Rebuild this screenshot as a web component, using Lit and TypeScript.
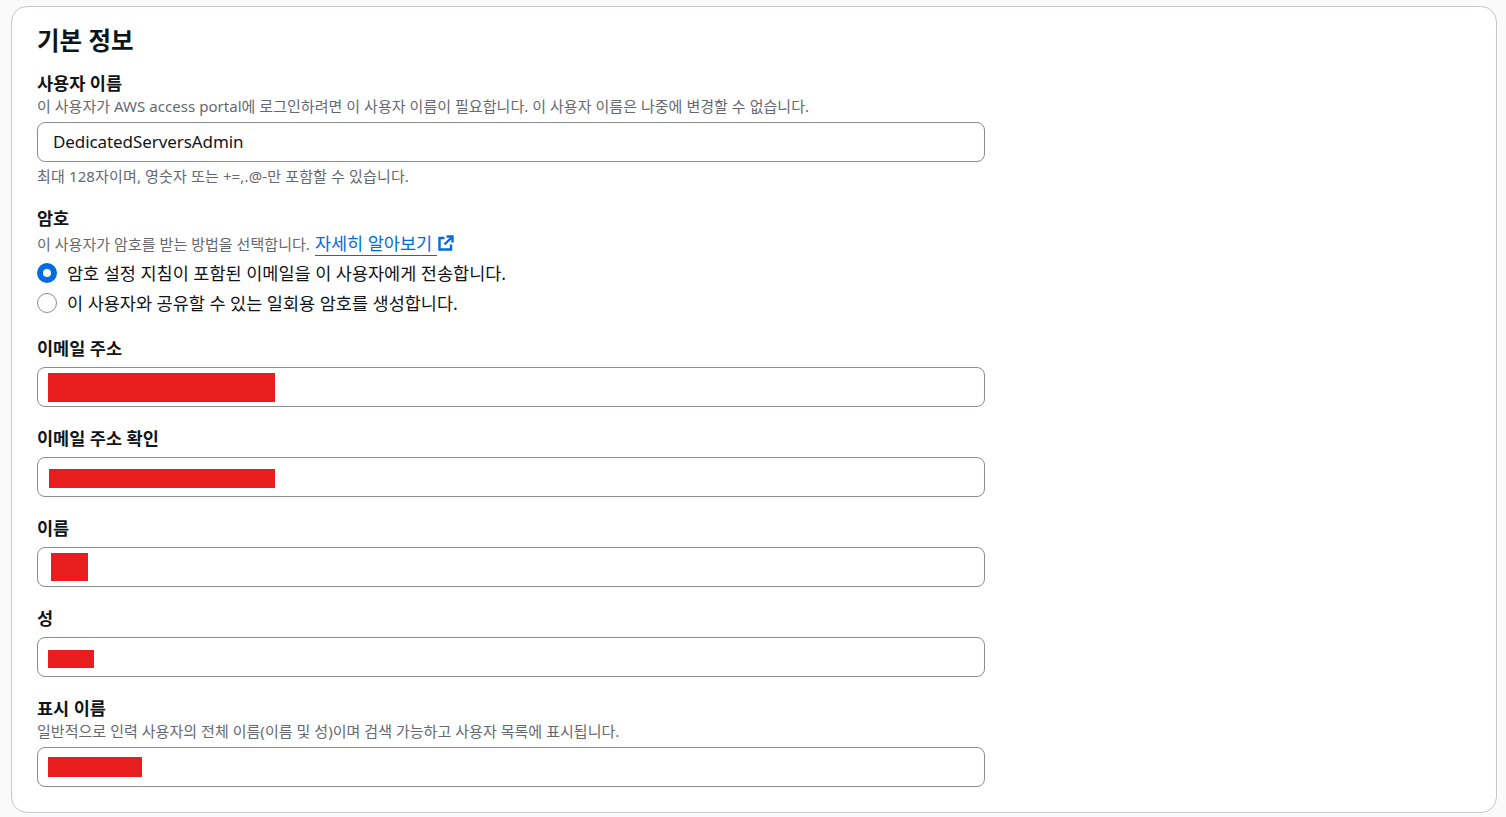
import { LitElement, css, html, nothing } from "lit";
import { customElement } from "lit/decorators.js";

interface Field {
  label: string;
  desc?: string;
  hint?: string;
  value?: string;
  // redaction block, relative to the input box
  mask?: { x: number; y: number; w: number; h: number };
}

const topField: Field = {
  label: "사용자 이름",
  desc: "이 사용자가 AWS access portal에 로그인하려면 이 사용자 이름이 필요합니다. 이 사용자 이름은 나중에 변경할 수 없습니다.",
  hint: "최대 128자이며, 영숫자 또는 +=,.@-만 포함할 수 있습니다.",
  value: "DedicatedServersAdmin",
};

const fields: Field[] = [
  { label: "이메일 주소", mask: { x: 11, y: 6, w: 227, h: 29 } },
  { label: "이메일 주소 확인", mask: { x: 12, y: 12, w: 226, h: 19 } },
  { label: "이름", mask: { x: 14, y: 6, w: 37, h: 28 } },
  { label: "성", mask: { x: 11, y: 13, w: 46, h: 18 } },
  {
    label: "표시 이름",
    desc: "일반적으로 인력 사용자의 전체 이름(이름 및 성)이며 검색 가능하고 사용자 목록에 표시됩니다.",
    mask: { x: 11, y: 10, w: 94, h: 20 },
  },
];

@customElement("app-root")
export class AppRoot extends LitElement {
  private renderField(f: Field) {
    return html`<div class="field ${f.hint ? "with-hint" : ""}">
      <div class="label">${f.label}</div>
      ${f.desc ? html`<div class="desc">${f.desc}</div>` : nothing}
      <div class="input-wrap ${f.desc ? "after-desc" : ""}">
        <input class="input" type="text" .value=${f.value ?? ""} />
        ${f.mask
          ? html`<div
              class="mask"
              style="left:${f.mask.x}px;top:${f.mask.y}px;width:${f.mask.w}px;height:${f.mask.h}px"
            ></div>`
          : nothing}
      </div>
      ${f.hint ? html`<div class="desc hint">${f.hint}</div>` : nothing}
    </div>`;
  }

  render() {
    return html`<section class="card">
      <h2 class="title">기본 정보</h2>
      ${this.renderField(topField)}
      <div class="field password">
        <div class="label">암호</div>
        <div class="desc pw-desc">
          이 사용자가 암호를 받는 방법을 선택합니다.
          <a class="link" href="#"
            >자세히 알아보기
            <svg class="ext" viewBox="0 0 16 16" width="16" height="16" fill="none" stroke="currentColor" stroke-width="2.4">
              <path d="M6.5 3H1.5v11.5H13V9.5" />
              <path d="M8.5 1.5H14.5V7.5M14.5 1.5 6.5 9.5" />
            </svg></a
          >
        </div>
        <label class="radio-row">
          <span class="radio checked"></span>
          <span class="radio-text">암호 설정 지침이 포함된 이메일을 이 사용자에게 전송합니다.</span>
        </label>
        <label class="radio-row">
          <span class="radio"></span>
          <span class="radio-text">이 사용자와 공유할 수 있는 일회용 암호를 생성합니다.</span>
        </label>
      </div>
      ${fields.map((f) => this.renderField(f))}
    </section>`;
  }

  static styles = css`
    :host {
      display: block;
      height: 817px;
      box-sizing: border-box;
      padding: 6px 9px 4px 11px;
      background: #fafafb;
      overflow: hidden;
      font-family: "Noto Sans", "Noto Sans CJK KR", sans-serif;
      color: #0f141a;
    }
    .card {
      box-sizing: border-box;
      height: 807px;
      background: #fff;
      border: 1px solid #c6c6cd;
      border-radius: 16px;
      padding: 18px 25px 0;
      display: flex;
      flex-direction: column;
    }
    .title {
      margin: 0 0 15px;
      font-size: 24.5px;
      line-height: 32px;
      font-weight: 700;
    }
    .field {
      width: 948px;
      margin-bottom: 20px;
    }
    .field.with-hint {
      margin-bottom: 21px;
    }
    .label {
      font-size: 17.5px;
      line-height: 22px;
      font-weight: 700;
      margin-bottom: 8px;
    }
    .label:has(+ .desc) {
      margin-bottom: 2px;
    }
    .desc {
      font-size: 15px;
      line-height: 20px;
      letter-spacing: 0.04px;
      color: #656871;
      white-space: nowrap;
    }
    .input-wrap {
      position: relative;
      height: 40px;
    }
    .input-wrap.after-desc {
      margin-top: 6px;
    }
    .input {
      box-sizing: border-box;
      display: block;
      width: 100%;
      height: 40px;
      padding: 0 15px 2px;
      border: 1px solid #8c8c94;
      border-radius: 8px;
      background: #fff;
      outline: none;
      font: inherit;
      font-size: 17px;
      letter-spacing: -0.08px;
      color: #0f141a;
    }
    .mask {
      position: absolute;
      background: #e81d1d;
    }
    .hint {
      margin-top: 4px;
      letter-spacing: 0.14px;
    }
    .pw-desc {
      margin-top: 5px;
      margin-bottom: 4px;
      display: flex;
      align-items: center;
      gap: 4px;
    }
    .password {
      margin-bottom: 19px;
    }
    .link {
      display: inline-flex;
      align-items: center;
      gap: 6px;
      margin-left: 1px;
      font-size: 17.5px;
      line-height: 20px;
      letter-spacing: 0;
      color: #006ce0;
      text-decoration: none;
      position: relative;
      padding-bottom: 3px;
      margin-top: -2px;
      margin-bottom: -3px;
    }
    .link::after {
      content: "";
      position: absolute;
      left: 0;
      right: 17px;
      bottom: 0;
      height: 1px;
      background: #006ce0;
    }
    .ext {
      flex: none;
    }
    .radio-row {
      display: flex;
      align-items: center;
      gap: 10px;
      height: 30px;
      font-size: 17.5px;
    }
    .radio-text {
      padding-bottom: 2px;
    }
    .radio {
      box-sizing: border-box;
      width: 20px;
      height: 20px;
      border-radius: 50%;
      border: 1px solid #8c8c94;
      background: #fff;
      flex: none;
    }
    .radio.checked {
      border: 6px solid #006ce0;
    }
  `;
}
